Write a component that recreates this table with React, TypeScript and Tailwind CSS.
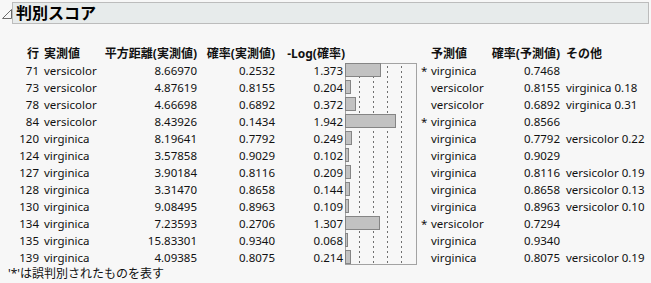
import React from "react";

type Row = {
  n: number;
  act: string;
  dist: string;
  prob: string;
  log: string;
  star: boolean;
  pred: string;
  pprob: string;
  other: string;
};

const rows: Row[] = [
  { n: 71, act: "versicolor", dist: "8.66970", prob: "0.2532", log: "1.373", star: true, pred: "virginica", pprob: "0.7468", other: "" },
  { n: 73, act: "versicolor", dist: "4.87619", prob: "0.8155", log: "0.204", star: false, pred: "versicolor", pprob: "0.8155", other: "virginica 0.18" },
  { n: 78, act: "versicolor", dist: "4.66698", prob: "0.6892", log: "0.372", star: false, pred: "versicolor", pprob: "0.6892", other: "virginica 0.31" },
  { n: 84, act: "versicolor", dist: "8.43926", prob: "0.1434", log: "1.942", star: true, pred: "virginica", pprob: "0.8566", other: "" },
  { n: 120, act: "virginica", dist: "8.19641", prob: "0.7792", log: "0.249", star: false, pred: "virginica", pprob: "0.7792", other: "versicolor 0.22" },
  { n: 124, act: "virginica", dist: "3.57858", prob: "0.9029", log: "0.102", star: false, pred: "virginica", pprob: "0.9029", other: "" },
  { n: 127, act: "virginica", dist: "3.90184", prob: "0.8116", log: "0.209", star: false, pred: "virginica", pprob: "0.8116", other: "versicolor 0.19" },
  { n: 128, act: "virginica", dist: "3.31470", prob: "0.8658", log: "0.144", star: false, pred: "virginica", pprob: "0.8658", other: "versicolor 0.13" },
  { n: 130, act: "virginica", dist: "9.08495", prob: "0.8963", log: "0.109", star: false, pred: "virginica", pprob: "0.8963", other: "versicolor 0.10" },
  { n: 134, act: "virginica", dist: "7.23593", prob: "0.2706", log: "1.307", star: true, pred: "versicolor", pprob: "0.7294", other: "" },
  { n: 135, act: "virginica", dist: "15.83301", prob: "0.9340", log: "0.068", star: false, pred: "virginica", pprob: "0.9340", other: "" },
  { n: 139, act: "virginica", dist: "4.09385", prob: "0.8075", log: "0.214", star: false, pred: "virginica", pprob: "0.8075", other: "versicolor 0.19" },
];

const ROW_H = 17;
const SCALE = 25.7;

function Chart() {
  const w = 72;
  const h = ROW_H * rows.length;
  return (
    <svg width={w} height={h} viewBox={`0 0 ${w} ${h}`} className="block">
      <rect x={0.5} y={1.5} width={w - 1} height={h - 3} fill="none" stroke="#a3a3a3" strokeWidth={1} />
      {[14.5, 28.5, 42.5, 56.5].map((x) => (
        <line key={x} x1={x} y1={4} x2={x} y2={h - 2} stroke="#6f6f6f" strokeWidth={1} strokeDasharray="2 3" />
      ))}
      {rows.map((r, i) => {
        const bw = Math.max(1, Math.round(parseFloat(r.log) * SCALE));
        return (
          <rect
            key={r.n}
            x={0.5}
            y={i * ROW_H + 1.5}
            width={bw}
            height={13}
            fill="#c2c2c2"
            stroke="#858585"
            strokeWidth={1}
          />
        );
      })}
    </svg>
  );
}

export default function App() {
  const font = "font-['Noto_Sans','Noto_Sans_CJK_JP',sans-serif]";
  return (
    <div className={`w-[651px] h-[283px] bg-[#f7f7f7] text-[#111] ${font} overflow-hidden relative`}>
      <div className="flex items-start pt-[2px]">
        <div className="w-[12px] h-[22px] flex items-center justify-center">
          <svg width="10" height="10" viewBox="0 0 10 10" className="mt-[1px] ml-[2px]">
            <polygon points="0.5,9.5 9.5,0.5 9.5,9.5" fill="none" stroke="#6b6b6b" strokeWidth="1" />
          </svg>
        </div>
        <div className="w-[637px] h-[22px] bg-[#e7ebeb] border border-[#bcbcbc] flex items-center pl-[3px]">
          <span className="text-[16px] font-bold leading-none text-black">判別スコア</span>
        </div>
      </div>

      <div className="mt-[21px] text-[11.5px] leading-[17px]">
        <div className="grid grid-cols-[40px_60px_97px_79px_69px_72px_14px_60px_69px_91px]">
          <div className="text-right pr-[1px] font-bold h-[17px] text-[12px]">行</div>
          <div className="pl-[4px] font-bold text-[12px]">実測値</div>
          <div className="text-right font-bold text-[12px]">平方距離(実測値)</div>
          <div className="text-right font-bold pr-[1px] text-[12px]">確率(実測値)</div>
          <div className="text-right font-bold whitespace-nowrap text-[12px]">-Log(確率)</div>
          <div />
          <div />
          <div className="font-bold text-[12px]">予測値</div>
          <div className="text-right font-bold whitespace-nowrap text-[12px]">確率(予測値)</div>
          <div className="pl-[6px] font-bold text-[12px]">その他</div>

          {rows.map((r, i) => (
            <React.Fragment key={r.n}>
              <div className="text-right pr-[1px] h-[17px]">{r.n}</div>
              <div className="pl-[4px]">{r.act}</div>
              <div className="text-right">{r.dist}</div>
              <div className="text-right pr-[1px]">{r.prob}</div>
              <div className="text-right pr-[2px]">{r.log}</div>
              {i === 0 ? (
                <div className="row-span-12">
                  <Chart />
                </div>
              ) : null}
              <div className="pl-[4px]">{r.star ? "*" : ""}</div>
              <div>{r.pred}</div>
              <div className="text-right">{r.pprob}</div>
              <div className="pl-[6px] whitespace-nowrap">{r.other}</div>
            </React.Fragment>
          ))}
        </div>
        <div className="pl-[8px] mt-[1px] leading-[14px] text-[12px]">'*'は誤判別されたものを表す</div>
      </div>
    </div>
  );
}
